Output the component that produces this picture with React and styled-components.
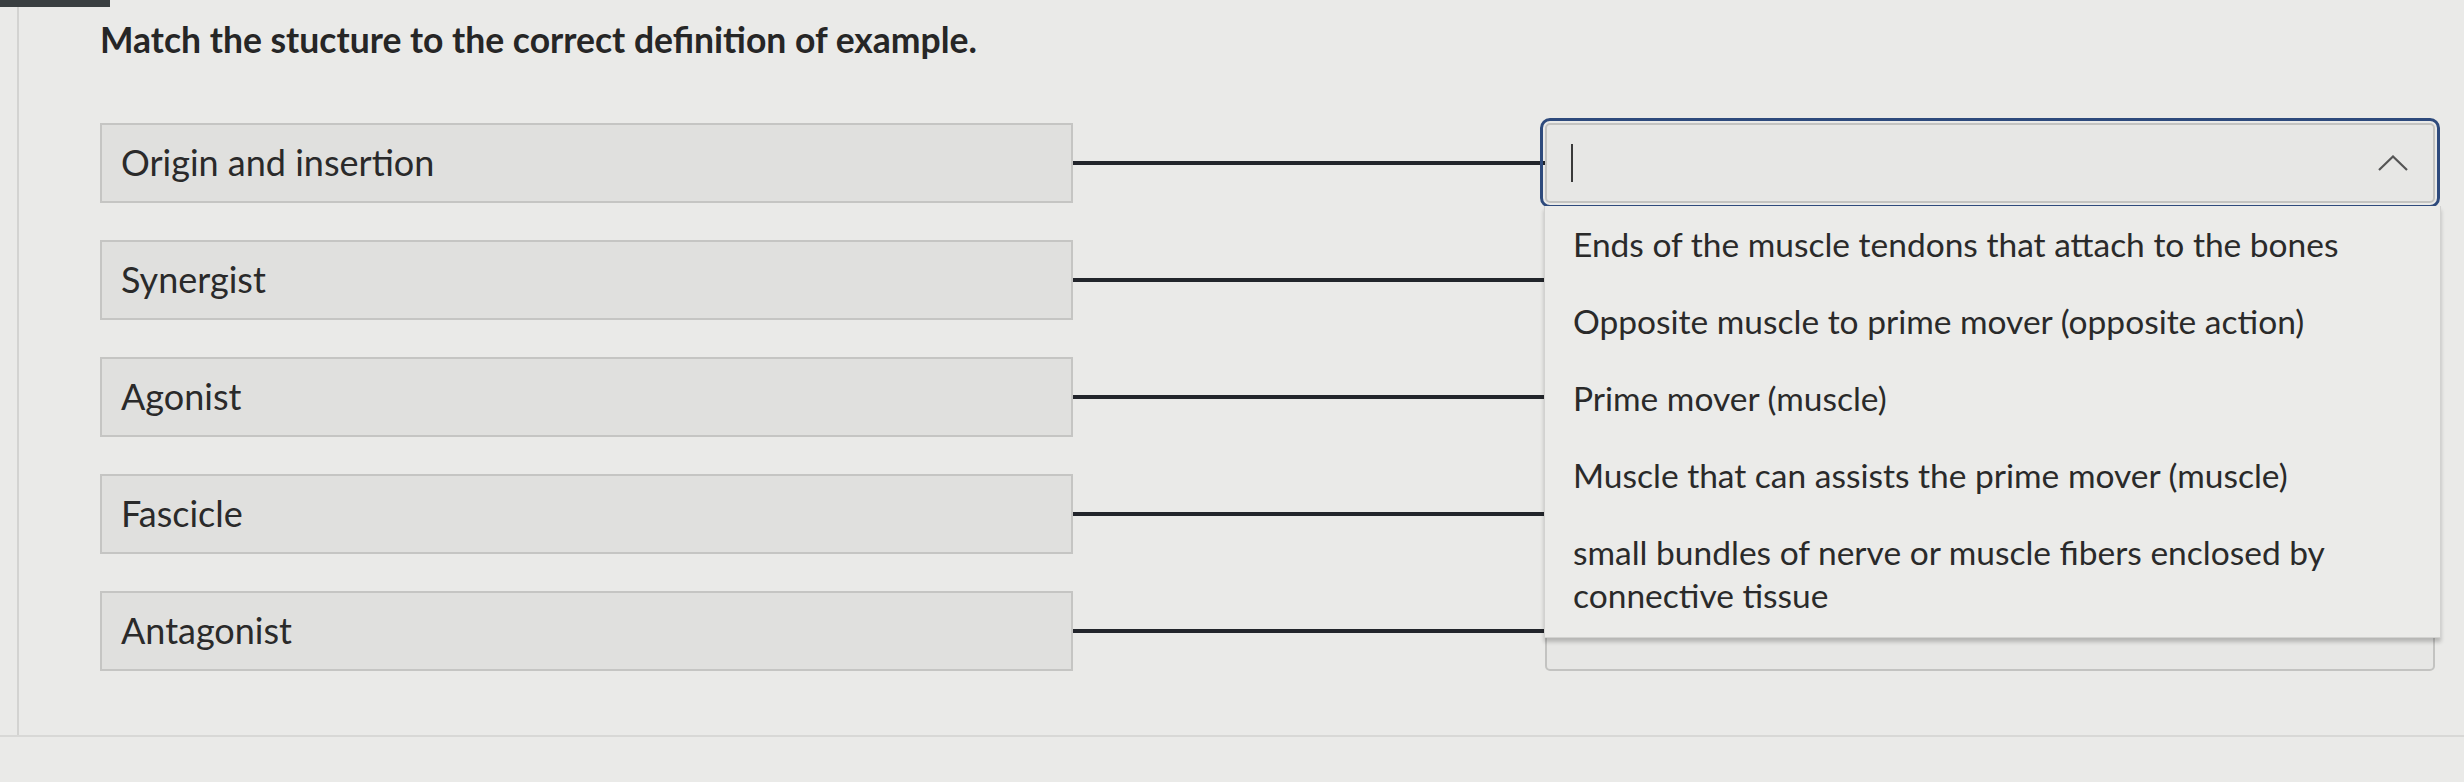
import React from "react";
import styled, { createGlobalStyle } from "styled-components";

const GlobalStyle = createGlobalStyle`
  html, body { margin: 0; padding: 0; }
  body {
    background: #eaeae8;
    font-family: Lato, "Open Sans", "Liberation Sans", sans-serif;
    color: #2b2b2b;
  }
`;

const Page = styled.div`
  width: 2464px;
  height: 782px;
  overflow: hidden;
  background: #eaeae8;
  display: flex;
  flex-direction: column;
`;

const TopTab = styled.div`
  flex: none;
  width: 110px;
  height: 7px;
  background: #3a3f41;
`;

const Panel = styled.main`
  flex: none;
  box-sizing: border-box;
  height: 728px;
  margin-left: 17px;
  border-left: 2px solid #d3d3d1;
  padding: 12px 0 0 81px;
`;

const Title = styled.h1`
  margin: 0;
  font-size: 35.5px;
  line-height: 1.2;
  font-weight: 700;
  color: #262626;
`;

const MatchList = styled.div`
  margin-top: 61px;
  display: flex;
  flex-direction: column;
  gap: 37px;
`;

const Row = styled.div`
  display: flex;
  align-items: center;
  height: 80px;
`;

const TermBox = styled.div`
  flex: none;
  box-sizing: border-box;
  width: 973px;
  height: 80px;
  display: flex;
  align-items: center;
  padding-left: 19px;
  background: #e0e0de;
  border: 2px solid #c5c5c3;
  font-size: 36px;
  line-height: 1.2;
  color: #2a2a2a;
`;

const Connector = styled.div`
  flex: none;
  width: 472px;
  height: 4px;
  background: #22252b;
`;

const SelectWrap = styled.div`
  position: relative;
  flex: none;
  width: 890px;
  height: 80px;
  z-index: ${(p) => (p.$open ? 3 : 1)};
`;

const SelectBox = styled.div`
  box-sizing: border-box;
  height: 100%;
  display: flex;
  align-items: center;
  justify-content: space-between;
  padding: 0 25px 0 24px;
  background: #e7e7e5;
  border: 2px solid #c3c3c1;
  border-radius: 5px;
  outline: ${(p) => (p.$focused ? "3px solid #2e4a7c" : "none")};
  outline-offset: 2px;
`;

const Caret = styled.span`
  display: block;
  width: 2px;
  height: 38px;
  background: #3a3a3a;
`;

const Menu = styled.ul`
  position: absolute;
  top: calc(100% + 3px);
  left: -1px;
  right: -6px;
  margin: 0;
  padding: 0 0 3px;
  list-style: none;
  background: #ebebe9;
  border: 1px solid #d2d2d0;
  border-top: none;
  box-shadow: 0 4px 4px rgba(0, 0, 0, 0.22);
`;

const Option = styled.li`
  padding: 17px 60px 17px 28px;
  font-size: 33.5px;
  line-height: 43px;
  color: #2a2a2a;
`;

const Divider = styled.div`
  flex: none;
  height: 2px;
  background: #d8d8d6;
`;

const Chevron = ({ up }) => (
  <svg width="30" height="16" viewBox="0 0 30 16" fill="none">
    <polyline
      points={up ? "1,15 15,1.5 29,15" : "3,1 15,10 27,1"}
      stroke="#555"
      strokeWidth="2.2"
      strokeLinejoin="miter"
    />
  </svg>
);

const terms = ["Origin and insertion", "Synergist", "Agonist", "Fascicle", "Antagonist"];
const options = [
  "Ends of the muscle tendons that attach to the bones",
  "Opposite muscle to prime mover (opposite action)",
  "Prime mover (muscle)",
  "Muscle that can assists the prime mover (muscle)",
  "small bundles of nerve or muscle fibers enclosed by connective tissue",
];

export default function App() {
  return (
    <Page>
      <GlobalStyle />
      <TopTab />
      <Panel>
        <Title>Match the stucture to the correct deﬁnition of example.</Title>
        <MatchList>
          {terms.map((t, i) => {
            const open = i === 0;
            return (
              <Row key={t}>
                <TermBox>{t}</TermBox>
                <Connector />
                <SelectWrap $open={open}>
                  <SelectBox $focused={open}>
                    {open ? <Caret /> : <span />}
                    <Chevron up={open} />
                  </SelectBox>
                  {open && (
                    <Menu>
                      {options.map((o) => (
                        <Option key={o}>{o}</Option>
                      ))}
                    </Menu>
                  )}
                </SelectWrap>
              </Row>
            );
          })}
        </MatchList>
      </Panel>
      <Divider />
    </Page>
  );
}
